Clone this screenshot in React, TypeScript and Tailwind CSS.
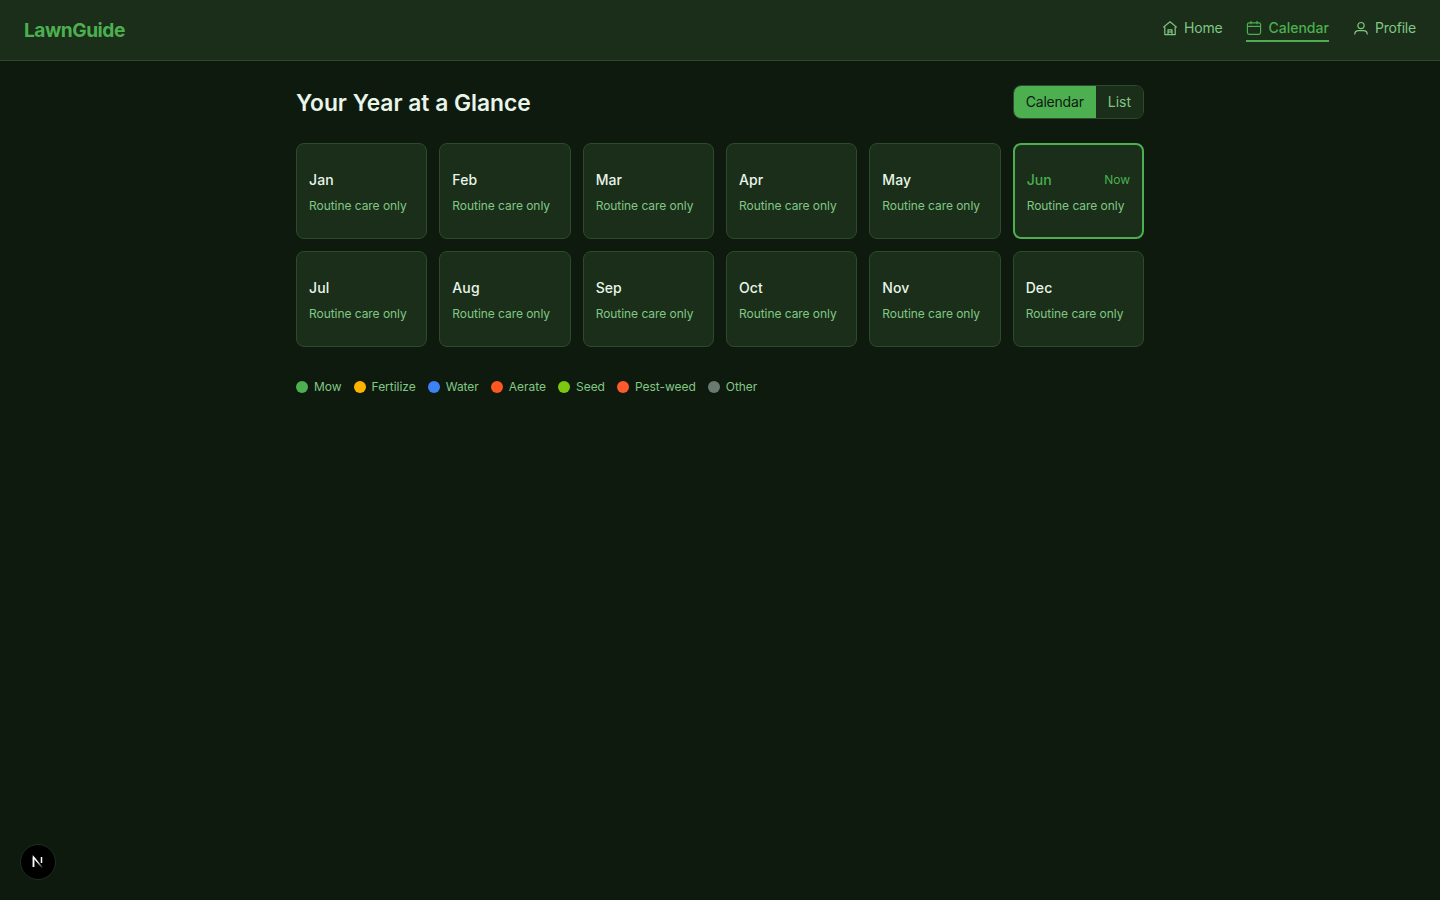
const months = ["Jan", "Feb", "Mar", "Apr", "May", "Jun", "Jul", "Aug", "Sep", "Oct", "Nov", "Dec"];

const legend = [
  { label: "Mow", color: "bg-[#4caf50]" },
  { label: "Fertilize", color: "bg-[#ffb300]" },
  { label: "Water", color: "bg-[#3b82f6]" },
  { label: "Aerate", color: "bg-[#ff5722]" },
  { label: "Seed", color: "bg-[#7cc70f]" },
  { label: "Pest-weed", color: "bg-[#ff5a2c]" },
  { label: "Other", color: "bg-[#6b7a70]" },
];

const HomeIcon = () => (
  <svg width="16" height="16" viewBox="0 0 16 16" fill="none" stroke="currentColor" strokeWidth="1.2" strokeLinejoin="round">
    <path d="M1.2 7.4 8 1.8l6.8 5.6" />
    <path d="M2.8 6.4V14.6h10.4V6.4" />
    <path d="M6 14.6V9.8h4v4.8" />
    <path d="M6 12h4" />
  </svg>
);

const CalendarIcon = () => (
  <svg width="16" height="16" viewBox="0 0 16 16" fill="none" stroke="currentColor" strokeWidth="1.2">
    <rect x="1.4" y="2.8" width="13.2" height="11.6" rx="1.8" />
    <path d="M1.4 6.4h13.2" />
    <path d="M5 1v3.2M11 1v3.2" />
  </svg>
);

const UserIcon = () => (
  <svg width="16" height="16" viewBox="0 0 16 16" fill="none" stroke="currentColor" strokeWidth="1.2">
    <circle cx="8" cy="5.6" r="3.1" />
    <path d="M1.8 14.6v-.4c0-2.2 1.8-3.6 3.8-3.6h4.8c2 0 3.8 1.4 3.8 3.6v.4" />
  </svg>
);

const MonthCard = ({ month }: { month: string }) => {
  const current = month === "Jun";
  return (
    <div
      className={
        current
          ? "flex h-24 flex-col justify-center rounded-lg border-2 border-[#4caf50] bg-[#1a2e1a] px-3 pt-0.5"
          : "flex h-24 flex-col justify-center rounded-lg border border-[#2d4a2d] bg-[#1a2e1a] px-3 pt-0.5"
      }
    >
      <div className="mb-2 flex items-center justify-between">
        <span className={current ? "text-sm leading-5 font-medium tracking-[0.1px] text-[#4caf50]" : "text-sm leading-5 font-medium tracking-[0.1px] text-[#e8f5e9]"}>
          {month}
        </span>
        {current && <span className="text-xs tracking-[-0.05px] text-[#4caf50]">Now</span>}
      </div>
      <p className="text-xs leading-4 tracking-[-0.05px] text-[#81c784]">Routine care only</p>
    </div>
  );
};

export default function App() {
  return (
    <div className="min-h-screen bg-[#0f1a0f] font-['Inter',sans-serif] antialiased">
      <header className="flex h-[61px] items-center justify-between border-b border-[#2d4a2d] bg-[#1a2e1a] px-6">
        <span className="text-[19.2px] font-bold tracking-[-0.5px] text-[#4caf50]">LawnGuide</span>
        <nav className="flex items-center gap-6 text-sm">
          <a className="flex items-center gap-1.5 pb-1 tracking-[-0.2px] text-[#81c784]">
            <HomeIcon />
            Home
          </a>
          <a className="flex items-center gap-1.5 border-b-2 border-[#4caf50] pb-0.5 font-medium text-[#4caf50]">
            <CalendarIcon />
            Calendar
          </a>
          <a className="flex items-center gap-1.5 pb-1 tracking-[-0.2px] text-[#81c784]">
            <UserIcon />
            Profile
          </a>
        </nav>
      </header>

      <main className="mx-auto max-w-4xl px-6 py-6">
        <div className="mb-6 flex items-center justify-between">
          <h1 className="mt-0.5 text-[22.8px] leading-8 font-semibold text-[#e8f5e9]">Your Year at a Glance</h1>
          <div className="flex overflow-hidden rounded-lg border border-[#2d4a2d] text-sm">
            <button className="bg-[#4caf50] px-3 py-2 leading-[16px] tracking-[-0.2px] text-[#0f1a0f]">Calendar</button>
            <button className="bg-[#1a2e1a] px-3 py-2 leading-[16px] text-[#81c784]">List</button>
          </div>
        </div>

        <div className="grid grid-cols-6 gap-3">
          {months.map((month) => (
            <MonthCard key={month} month={month} />
          ))}
        </div>

        <div className="mt-8 flex items-center gap-3 text-xs tracking-[-0.03px] text-[#81c784]">
          {legend.map((item) => (
            <div key={item.label} className="flex items-center gap-1.5">
              <span className={`h-3 w-3 rounded-full ${item.color}`} />
              {item.label}
            </div>
          ))}
        </div>
      </main>

      <div className="fixed bottom-5 left-5 flex h-9 w-9 items-center justify-center rounded-full border border-[#222d22] bg-black">
        <svg width="16" height="16" viewBox="0 0 16 16" fill="none">
          <defs>
            <linearGradient id="nextDiag" x1="3" y1="3" x2="13" y2="14" gradientUnits="userSpaceOnUse">
              <stop offset="0.4" stopColor="#fff" />
              <stop offset="1" stopColor="#fff" stopOpacity="0" />
            </linearGradient>
          </defs>
          <path d="M3.5 13V3L12.5 14" stroke="url(#nextDiag)" strokeWidth="1.5" />
          <path d="M3.5 13V3" stroke="#fff" strokeWidth="1.5" />
          <path d="M11.5 3V9" stroke="#fff" strokeWidth="1.5" />
        </svg>
      </div>
    </div>
  );
}
